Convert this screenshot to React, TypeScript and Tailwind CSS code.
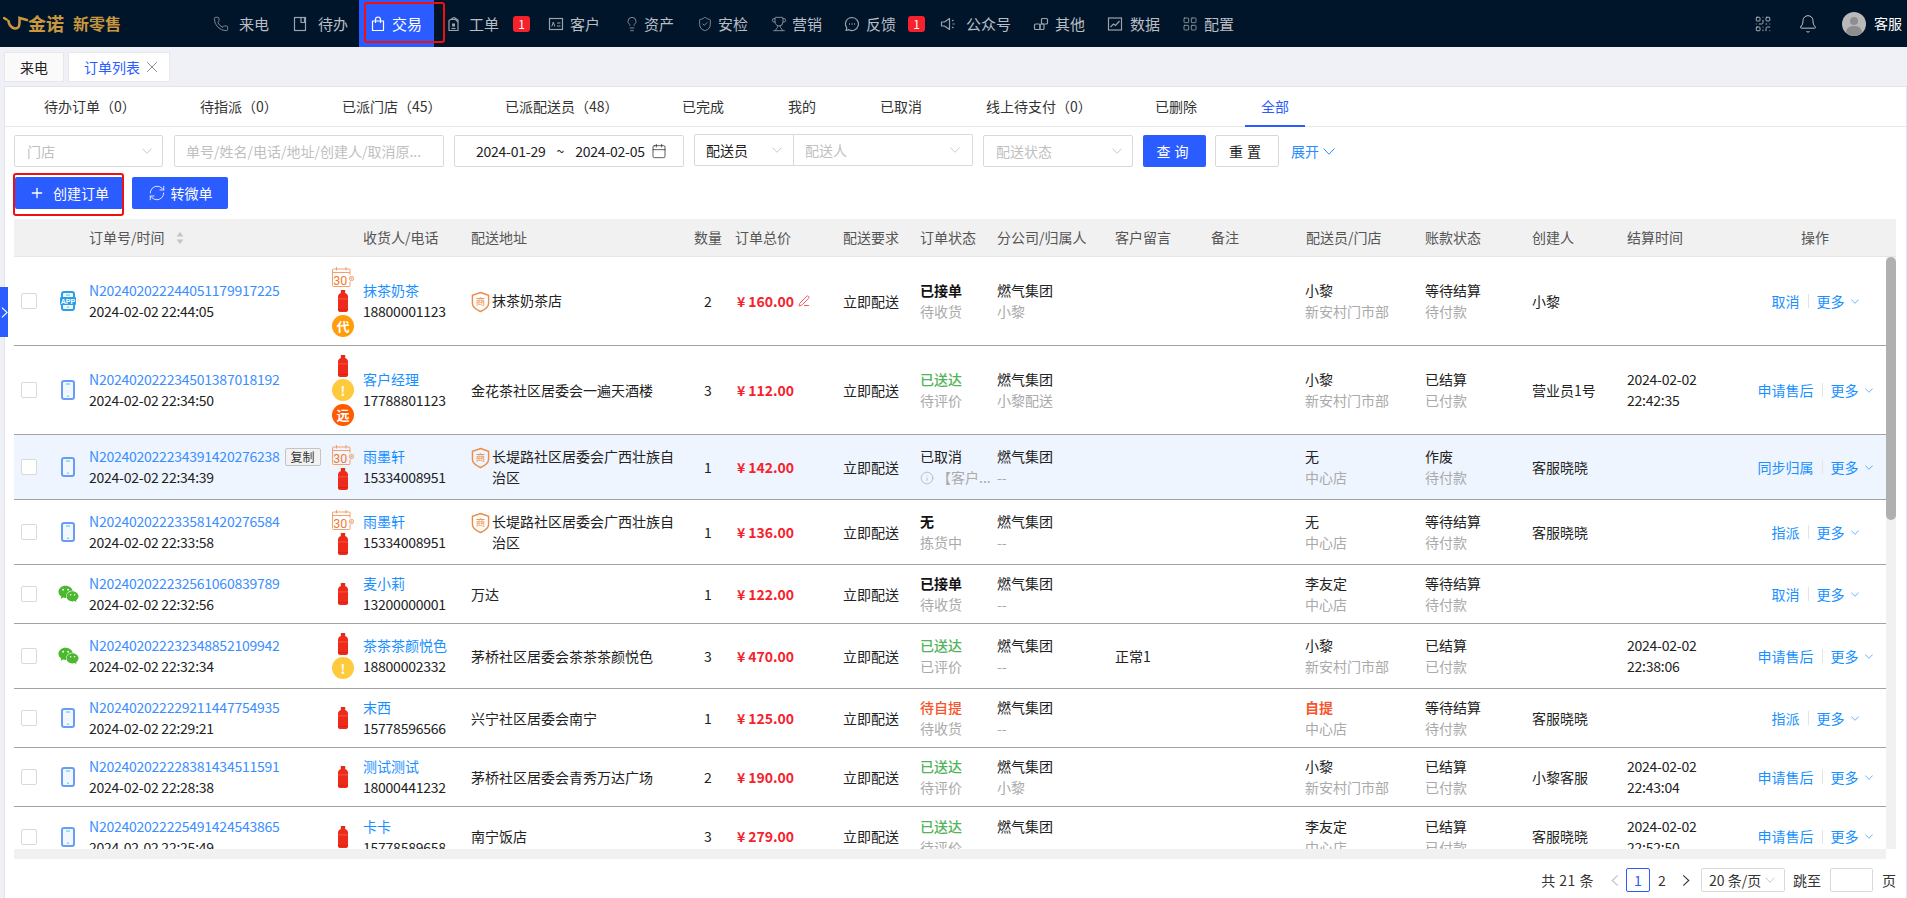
import type React from "react"
import { Bell, Calendar, Info, LayoutGrid, Lightbulb, PenLine, Phone, Plus, QrCode, RefreshCw, ShieldCheck, Trophy, X } from "lucide-react"
import { FaWeixin } from "react-icons/fa"

type IconProps = { className?: string; strokeWidth?: number }

const TodoIcon = ({ className }: IconProps) => (
  <svg viewBox="0 0 16 16" fill="none" stroke="currentColor" strokeWidth="1.2" className={className}>
    <rect x="2.500" y="1.500" width="11" height="13" />
    <path d="M9 1.500v5h3.500v-5" />
  </svg>
)

const BagIcon = ({ className }: IconProps) => (
  <svg viewBox="0 0 16 16" fill="none" stroke="currentColor" strokeWidth="1.2" className={className}>
    <path d="M2.500 5h11v9.500h-11z" strokeLinejoin="round" />
    <path d="M5.500 7V3.500a2.500 2.500 0 0 1 5 0V7" />
  </svg>
)

const TicketIcon = ({ className }: IconProps) => (
  <svg viewBox="0 0 16 16" fill="none" stroke="currentColor" strokeWidth="1.2" className={className}>
    <path d="M4 4.500l5-3 4 2.500v10.500H4z" strokeLinejoin="round" />
    <path d="M5 3.500h5.500L13 6" />
    <rect x="7" y="7.500" width="3" height="3" fill="currentColor" stroke="none" />
    <path d="M6.500 12.500h4" />
  </svg>
)

const CardIcon = ({ className }: IconProps) => (
  <svg viewBox="0 0 16 16" fill="none" stroke="currentColor" strokeWidth="1.2" className={className}>
    <rect x="1.500" y="2.500" width="13" height="11" />
    <path d="M3.800 10.500l1.500-4.500 1.500 4.500M9 7h3.500M9 10h3.500" strokeWidth="1" />
  </svg>
)

const BubbleIcon = ({ className }: IconProps) => (
  <svg viewBox="0 0 16 16" fill="none" stroke="currentColor" strokeWidth="1.2" className={className}>
    <path d="M8 1.500a6.500 6.500 0 1 1-3.200 12.200l-2.800.8.800-2.600A6.500 6.500 0 0 1 8 1.500z" strokeLinejoin="round" />
    <path d="M5 8h.9M7.600 8h.9M10.200 8h.9" strokeWidth="1.300" />
  </svg>
)

const SpeakerIcon = ({ className }: IconProps) => (
  <svg viewBox="0 0 16 16" fill="none" stroke="currentColor" strokeWidth="1.2" className={className}>
    <path d="M1.500 6h3l5-3.500v11l-5-3.500h-3z" strokeLinejoin="round" />
    <path d="M12 5l1.500-1M12.500 8h2M12 11l1.500 1" />
  </svg>
)

const BlocksIcon = ({ className }: IconProps) => (
  <svg viewBox="0 0 16 16" fill="none" stroke="currentColor" strokeWidth="1.2" className={className}>
    <rect x="1.500" y="8" width="5.500" height="5.500" rx="1" />
    <rect x="7" y="8" width="4" height="5.500" rx="1" />
    <rect x="8.500" y="2.500" width="6" height="5.500" rx="1" />
  </svg>
)

const ChartIcon = ({ className }: IconProps) => (
  <svg viewBox="0 0 16 16" fill="none" stroke="currentColor" strokeWidth="1.2" className={className}>
    <rect x="1.500" y="2" width="13" height="12" />
    <path d="M3.500 11l3-3 2 1.500 4-4.500" />
  </svg>
)

// the reference's arrows fill the whole box, lucide's only half of it
const Chev = ({ className }: { className?: string }) => (
  <svg viewBox="0 0 12 7" fill="none" stroke="currentColor" strokeWidth="1" className={className}>
    <path d="M.5.500L6 6.200 11.500.500" />
  </svg>
)

const ChevSide = ({ className, left }: { className?: string; left?: boolean }) => (
  <svg viewBox="0 0 8 12" fill="none" stroke="currentColor" strokeWidth="1.200" className={className}>
    <path d={left ? "M7 .5L1 6l6 5.500" : "M1 .5L7 6l-6 5.500"} />
  </svg>
)

const navItems = [
  { label: "来电", Icon: Phone, box: "w-[79px] gap-[10px]" },
  { label: "待办", Icon: TodoIcon, box: "w-[78px] gap-[10px]" },
  { label: "交易", Icon: BagIcon, box: "w-[75px] gap-[6px]", active: true },
  { label: "工单", Icon: TicketIcon, box: "w-[103px] gap-[8px]", badge: 1 },
  { label: "客户", Icon: CardIcon, box: "w-[76px] gap-[6px]" },
  { label: "资产", Icon: Lightbulb, box: "w-[73px] gap-[4px]" },
  { label: "安检", Icon: ShieldCheck, box: "w-[74px] gap-[5px]" },
  { label: "营销", Icon: Trophy, box: "w-[73px] gap-[5px]" },
  { label: "反馈", Icon: BubbleIcon, box: "w-[96px] gap-[6px]", badge: 1 },
  { label: "公众号", Icon: SpeakerIcon, box: "w-[93px] gap-[10px]" },
  { label: "其他", Icon: BlocksIcon, box: "w-[74px] gap-[6px]" },
  { label: "数据", Icon: ChartIcon, box: "w-[75px] gap-[7px]" },
  { label: "配置", Icon: LayoutGrid, box: "w-[74px] gap-[6px]" },
]

const subTabs = [
  { label: "待办订单（0）", box: "w-[156px]" },
  { label: "待指派（0）", box: "w-[142px]" },
  { label: "已派门店（45）", box: "w-[163px]" },
  { label: "已派配送员（48）", box: "w-[177px]" },
  { label: "已完成", box: "w-[106px]" },
  { label: "我的", box: "w-[92px]" },
  { label: "已取消", box: "w-[106px]" },
  { label: "线上待支付（0）", box: "w-[169px]" },
  { label: "已删除", box: "w-[90px]" },
]

type Row = {
  h: string
  bg?: string
  no: string
  time: string
  source: "app" | "phone" | "wechat"
  marks: string[]
  name: string
  phone: string
  address: string
  shop?: boolean
  qty: number
  price: string
  edit?: boolean
  status: string
  statusCls: string
  sub: string
  company: string
  owner: string
  remark?: string
  person: string
  personCls?: string
  store: string
  account: string
  paid: string
  creator?: string
  settle?: string[]
  action: string
  copy?: boolean
}

const bold = "font-bold text-[#111]"
const green = "text-[#52b35a] font-medium"
// digits in the reference run a little narrower than any installed font
const digits = "tracking-[-0.24px]"

const rows: Row[] = [
  { h: "h-[89px]", no: "N202402022244051179917225", time: "2024-02-02 22:44:05", source: "app", marks: ["cal", "gas", "dai"], name: "抹茶奶茶", phone: "18800001123", address: "抹茶奶茶店", shop: true, qty: 2, price: "160.00", edit: true, status: "已接单", statusCls: bold, sub: "待收货", company: "燃气集团", owner: "小黎", person: "小黎", store: "新安村门市部", account: "等待结算", paid: "待付款", creator: "小黎", action: "取消" },
  { h: "h-[89px]", no: "N202402022234501387018192", time: "2024-02-02 22:34:50", source: "phone", marks: ["gas", "warn", "yuan"], name: "客户经理", phone: "17788801123", address: "金花茶社区居委会一遍天酒楼", qty: 3, price: "112.00", status: "已送达", statusCls: green, sub: "待评价", company: "燃气集团", owner: "小黎配送", person: "小黎", store: "新安村门市部", account: "已结算", paid: "已付款", creator: "营业员1号", settle: ["2024-02-02", "22:42:35"], action: "申请售后" },
  { h: "h-[65px]", bg: "bg-[#eef5fe]", copy: true, no: "N202402022234391420276238", time: "2024-02-02 22:34:39", source: "phone", marks: ["cal", "gas"], name: "雨墨轩", phone: "15334008951", address: "长堤路社区居委会广西壮族自治区", shop: true, qty: 1, price: "142.00", status: "已取消", statusCls: "text-[#222]", sub: "【客户...", company: "燃气集团", owner: "--", person: "无", store: "中心店", account: "作废", paid: "待付款", creator: "客服晓晓", action: "同步归属" },
  { h: "h-[65px]", no: "N202402022233581420276584", time: "2024-02-02 22:33:58", source: "phone", marks: ["cal", "gas"], name: "雨墨轩", phone: "15334008951", address: "长堤路社区居委会广西壮族自治区", shop: true, qty: 1, price: "136.00", status: "无", statusCls: bold, sub: "拣货中", company: "燃气集团", owner: "--", person: "无", store: "中心店", account: "等待结算", paid: "待付款", creator: "客服晓晓", action: "指派" },
  { h: "h-[59px]", no: "N202402022232561060839789", time: "2024-02-02 22:32:56", source: "wechat", marks: ["gas"], name: "麦小莉", phone: "13200000001", address: "万达", qty: 1, price: "122.00", status: "已接单", statusCls: bold, sub: "待收货", company: "燃气集团", owner: "--", person: "李友定", store: "中心店", account: "等待结算", paid: "待付款", action: "取消" },
  { h: "h-[65px]", no: "N202402022232348852109942", time: "2024-02-02 22:32:34", source: "wechat", marks: ["gas", "warn"], name: "茶茶茶颜悦色", phone: "18800002332", address: "茅桥社区居委会茶茶茶颜悦色", qty: 3, price: "470.00", status: "已送达", statusCls: green, sub: "已评价", company: "燃气集团", owner: "--", remark: "正常1", person: "小黎", store: "新安村门市部", account: "已结算", paid: "已付款", settle: ["2024-02-02", "22:38:06"], action: "申请售后" },
  { h: "h-[59px]", no: "N202402022229211447754935", time: "2024-02-02 22:29:21", source: "phone", marks: ["gas"], name: "末西", phone: "15778596566", address: "兴宁社区居委会南宁", qty: 1, price: "125.00", status: "待自提", statusCls: "text-[#f5562d] font-medium", sub: "待收货", company: "燃气集团", owner: "--", person: "自提", personCls: "text-[#f5562d] font-bold", store: "中心店", account: "等待结算", paid: "待付款", creator: "客服晓晓", action: "指派" },
  { h: "h-[59px]", no: "N202402022228381434511591", time: "2024-02-02 22:28:38", source: "phone", marks: ["gas"], name: "测试测试", phone: "18000441232", address: "茅桥社区居委会青秀万达广场", qty: 2, price: "190.00", status: "已送达", statusCls: green, sub: "待评价", company: "燃气集团", owner: "小黎", person: "小黎", store: "新安村门市部", account: "已结算", paid: "已付款", creator: "小黎客服", settle: ["2024-02-02", "22:43:04"], action: "申请售后" },
  { h: "h-[60px]", no: "N202402022225491424543865", time: "2024-02-02 22:25:49", source: "phone", marks: ["gas"], name: "卡卡", phone: "15778589658", address: "南宁饭店", qty: 3, price: "279.00", status: "已送达", statusCls: green, sub: "待评价", company: "燃气集团", owner: "--", person: "李友定", store: "中心店", account: "已结算", paid: "已付款", creator: "客服晓晓", settle: ["2024-02-02", "22:52:50"], action: "申请售后" },
]

const headCols = "grid grid-cols-[40px_28px_245px_32px_108px_223px_36px_112px_77px_77px_118px_96px_94px_120px_107px_95px_112px_162px]"
const rowCols = "grid grid-cols-[40px_28px_245px_32px_108px_223px_36px_112px_77px_77px_118px_96px_94px_120px_107px_95px_112px_152px]"

const Gas = () => (
  <svg viewBox="0 0 10 22" className="h-[22px] w-[10px]">
    <rect x="2.800" y="0" width="4.400" height="3" rx="0.600" fill="#d9301c" />
    <path d="M0 6.500C0 4.200 2 2.800 5 2.800s5 1.400 5 3.700V20c0 1.200-.8 2-2 2H2c-1.200 0-2-.8-2-2z" fill="#ee2a1b" />
    <rect x="0" y="8.500" width="10" height="0.800" fill="#ff8a6a" opacity="0.6" />
    <rect x="0" y="19" width="10" height="0.700" fill="#b81d10" opacity="0.6" />
  </svg>
)

const Cal30 = () => (
  <svg viewBox="0 0 22 22" className="h-[22px] w-[22px]" fill="none" stroke="#f0965e" strokeWidth="0.900">
    <path d="M18 15.500v4a1 1 0 0 1-1 1H1.500a1 1 0 0 1-1-1V4a1 1 0 0 1 1-1H17a1 1 0 0 1 1 1v5" />
    <path d="M.5 6.500H18M4.500 1v3.500M14 1v3.500" />
    <circle cx="19.500" cy="12.500" r="2.200" />
    <circle cx="19.500" cy="12.500" r="0.700" />
    <text x="1.300" y="18.500" fontSize="12.500" fill="#ee7a36" stroke="none" fontFamily="'Roboto',sans-serif">30</text>
  </svg>
)

const Dot = ({ cls, children }: { cls: string; children: React.ReactNode }) => (
  <span className={`flex h-[22px] w-[22px] items-center justify-center rounded-full text-[13px] leading-none font-bold text-white ${cls}`}>{children}</span>
)

const Mark = ({ kind }: { kind: string }) => {
  if (kind === "cal") return <Cal30 />
  if (kind === "gas") return <Gas />
  if (kind === "warn") return <Dot cls="bg-[#ffc93c]">!</Dot>
  if (kind === "dai") return <Dot cls="bg-[#ff9d0a]">代</Dot>
  return <Dot cls="bg-[#ff5a00]">远</Dot>
}

const Source = ({ kind }: { kind: Row["source"] }) => {
  if (kind === "wechat") return <FaWeixin className="h-[20px] w-[21px] text-[#4cb82f]" />
  const line = kind === "app" ? "#2a9fe6" : "#6a9cf5"
  return (
    <svg viewBox="0 0 16 20" className="h-[20px] w-[16px]">
      <rect x="2" y="1" width="12" height="18" rx="2" fill="#f2f7ff" stroke={line} strokeWidth="2" />
      <rect x="6" y="3.500" width="4" height="1" fill="#3ccfc4" />
      <rect x="7.300" y="15.500" width="1.400" height="1.400" fill="#3ccfc4" />
      {kind === "app" && (
        <>
          <rect x="0" y="6" width="16" height="8" rx="1" fill="#2a9fe6" />
          <text x="8" y="12.600" textAnchor="middle" fontSize="7" fontWeight="700" fill="#fff" fontFamily="'Liberation Sans',sans-serif">APP</text>
        </>
      )}
    </svg>
  )
}

const Shop = () => (
  <svg viewBox="0 0 20 22" className="mt-[1px] h-[22px] w-[19px] shrink-0" fill="none">
    <path d="M10 1l8.500 3v8.500c0 3.500-4 6.500-8.500 8.500-4.500-2-8.500-5-8.500-8.500V4z" stroke="#ee8b45" strokeWidth="1.500" />
    <text x="10" y="14.500" textAnchor="middle" fontSize="10" fill="#ee8b45" fontFamily="'Noto Sans CJK SC',sans-serif">商</text>
  </svg>
)

const Select = ({ text, box }: { text: string; box: string }) => (
  <div className={`flex h-[32px] items-center justify-between rounded-[2px] border border-[#d9d9d9] pr-[10px] pl-[12px] text-[#bfbfbf] ${box}`}>
    <span>{text}</span>
    <Chev className="h-[6px] w-[10px] text-[#bfbfbf]" />
  </div>
)

const TwoLines = ({ top, bottom, topCls = "text-[#222]" }: { top: string; bottom: string; topCls?: string }) => (
  <div className="flex flex-col justify-center pl-[5px]">
    <div className={topCls}>{top}</div>
    <div className="whitespace-nowrap text-[#aaaaaa]">{bottom}</div>
  </div>
)

const Cell = ({ children }: { children?: React.ReactNode }) => <div className="flex items-center pl-[5px] text-[#222]">{children}</div>

const OrderRow = ({ row }: { row: Row }) => (
  <div className={`${rowCols} border-b border-[#a3a3a3] ${row.h} ${row.bg ?? "bg-white"}`}>
    <div className="flex items-center pl-[7px]">
      <span className="h-[16px] w-[16px] rounded-[2px] border border-[#d9d9d9] bg-white" />
    </div>
    <div className="flex items-center justify-center">
      <Source kind={row.source} />
    </div>
    <div className="flex flex-col justify-center pl-[7px]">
      <div className="flex items-center">
        <span className={`text-[#3a8eff] ${digits}`}>{row.no}</span>
        {row.copy && <span className="ml-[5px] flex h-[18px] w-[36px] items-center justify-center rounded-[2px] border border-[#c4c4c4] bg-[#f2f2f2] text-[12px] text-[#333]">复制</span>}
      </div>
      <div className={`text-[#222] ${digits}`}>{row.time}</div>
    </div>
    <div className="flex flex-col items-center justify-center gap-[2.5px]">
      {row.marks.map((m, i) => (
        <Mark key={i} kind={m} />
      ))}
    </div>
    <div className="flex flex-col justify-center pl-[4px]">
      <div className="text-[#1890ff]">{row.name}</div>
      <div className={`text-[#222] ${digits}`}>{row.phone}</div>
    </div>
    <div className="flex items-center pl-[4px] text-[#222]">
      <div className="flex items-start">
        {row.shop && <Shop />}
        <div className={row.shop ? "ml-[2px] w-[184px]" : ""}>{row.address}</div>
      </div>
    </div>
    <div className="flex items-center justify-center text-[#222]">{row.qty}</div>
    <div className="flex items-center pl-[11px] font-bold text-[#f5222d]">
      <span className="mr-[3px]">¥</span>
      {row.price}
      {row.edit && <PenLine className="ml-[4px] h-[12px] w-[12px]" strokeWidth={1.500} />}
    </div>
    <Cell>立即配送</Cell>
    <div className="flex flex-col justify-center pl-[5px]">
      <div className={row.statusCls}>{row.status}</div>
      <div className="flex items-center text-[#aaaaaa]">
        {row.sub.startsWith("【") && <Info className="mr-[3px] h-[14px] w-[14px]" strokeWidth={1.200} />}
        {row.sub}
      </div>
    </div>
    <TwoLines top={row.company} bottom={row.owner} />
    <Cell>{row.remark}</Cell>
    <Cell />
    <TwoLines top={row.person} bottom={row.store} topCls={row.personCls ?? "text-[#222]"} />
    <TwoLines top={row.account} bottom={row.paid} />
    <Cell>{row.creator}</Cell>
    <div className={`flex flex-col justify-center pl-[5px] text-[#222] ${digits}`}>
      {row.settle?.map((s) => (
        <div key={s}>{s}</div>
      ))}
    </div>
    <div className="flex items-center justify-center pl-[10px] text-[#1890ff]">
      <span>{row.action}</span>
      <span className="mx-[8px] h-[14px] w-px bg-[#e4e4e4]" />
      <span>更多</span>
      <Chev className="ml-[6px] h-[5px] w-[8px]" />
    </div>
  </div>
)

const headers = [
  { t: "", cls: "" },
  { t: "", cls: "" },
  { t: "订单号/时间", cls: "pl-[7px]", sort: true },
  { t: "", cls: "" },
  { t: "收货人/电话", cls: "pl-[4px]" },
  { t: "配送地址", cls: "pl-[4px]" },
  { t: "数量", cls: "justify-center" },
  { t: "订单总价", cls: "pl-[9px]" },
  { t: "配送要求", cls: "pl-[5px]" },
  { t: "订单状态", cls: "pl-[5px]" },
  { t: "分公司/归属人", cls: "pl-[5px]" },
  { t: "客户留言", cls: "pl-[5px]" },
  { t: "备注", cls: "pl-[5px]" },
  { t: "配送员/门店", cls: "pl-[6px]" },
  { t: "账款状态", cls: "pl-[5px]" },
  { t: "创建人", cls: "pl-[5px]" },
  { t: "结算时间", cls: "pl-[5px]" },
  { t: "操作", cls: "justify-center" },
]

export default function App() {
  return (
    <div className="relative flex h-screen w-full flex-col overflow-hidden bg-[#eff1f6] font-['Noto_Sans_CJK_SC','Microsoft_YaHei',sans-serif] text-[14px] leading-[21px]">
      {/* top nav */}
      <header className="flex h-[47px] shrink-0 items-center bg-[#001529]">
        <div className="flex w-[202px] items-center pl-[3px] text-[#c9983e]">
          <svg viewBox="0 0 26 17" className="h-[17px] w-[26px]" fill="none" stroke="#c9983e" strokeWidth="2.600" strokeLinecap="round">
            <path d="M1 3l2.500 1.500M5.500 6c.5 6 6 9 9.500 6.500 2-1.500 1.500-6 1.500-9.500L24 5" />
          </svg>
          <span className="-ml-px text-[18px] font-bold">金诺</span>
          <span className="ml-[9px] text-[16px] font-bold">新零售</span>
        </div>
        {navItems.map(({ label, Icon, box, active, badge }) => (
          <div key={label} className={`relative flex h-full items-center pl-[11px] text-[15px] ${box} ${active ? "bg-[#2b5cff] text-white" : "text-[#b9bec5]"}`}>
            <Icon className={active ? "h-[16px] w-[16px] text-white" : "h-[16px] w-[16px] text-[#9aa3ad]"} strokeWidth={1.200} />
            <span className="whitespace-nowrap">{label}</span>
            {badge && <span className="ml-[6px] flex h-[16px] w-[17px] items-center justify-center rounded-[3px] bg-[#f5222d] text-[12px] text-white">{badge}</span>}
            {active && <span className="absolute top-[2px] left-[5px] h-[41px] w-[81px] rounded-[3px] border-2 border-[#f01010]" />}
          </div>
        ))}
        <div className="ml-auto flex items-center">
          <QrCode className="h-[18px] w-[18px] text-[#b9bec5]" strokeWidth={1.200} />
          <Bell className="ml-[26px] h-[20px] w-[20px] text-[#d0d4d9]" strokeWidth={1.100} />
          <svg viewBox="0 0 24 24" className="ml-[24px] h-[24px] w-[24px]">
            <circle cx="12" cy="12" r="12" fill="#b9b9b9" />
            <circle cx="12" cy="9" r="4" fill="#8e8e8e" />
            <path d="M4 20c1-5 4-6 8-6s7 1 8 6c-2 2.500-5 4-8 4s-6-1.500-8-4z" fill="#8e8e8e" />
          </svg>
          <span className="mr-[5px] ml-[8px] text-white">客服</span>
        </div>
      </header>

      {/* page tabs */}
      <div className="flex h-[39px] shrink-0 gap-[4px] pt-[5px] pl-[4px]">
        <div className="flex h-[30px] w-[60px] items-center justify-center border border-[#e8e8e8] bg-[#fafafa] text-[#222]">来电</div>
        <div className="flex h-[30px] w-[102px] items-center gap-[6px] border border-[#e8e8e8] bg-white pl-[15px] text-[#2b5cff]">
          订单列表
          <X className="-mx-[3px] h-[18px] w-[18px] text-[#666]" strokeWidth={1} />
        </div>
      </div>

      {/* panel */}
      <main className="ml-[4px] flex min-h-0 flex-1 flex-col border border-b-0 border-[#e4e5ec] bg-white">
        <div className="flex h-[40px] shrink-0 items-stretch border-b border-[#e8e8e8] pl-[39px] text-[#333]">
          {subTabs.map((t) => (
            <div key={t.label} className={`flex items-center whitespace-nowrap ${t.box}`}>
              {t.label}
            </div>
          ))}
          <div className="-mb-px flex w-[60px] items-center justify-center border-b-2 border-[#2b5cff] text-[#2b5cff]">全部</div>
        </div>

        {/* filters */}
        <div className="mt-[8px] flex h-[32px] shrink-0 items-center pl-[9px]">
          <Select text="门店" box="w-[149px]" />
          <div className="ml-[11px] flex h-[32px] w-[270px] items-center rounded-[2px] border border-[#d9d9d9] pl-[11px] text-[#bfbfbf]">单号/姓名/电话/地址/创建人/取消原...</div>
          <div className="ml-[10px] flex h-[32px] w-[230px] items-center rounded-[2px] border border-[#d9d9d9] pl-[21px] text-[#222]">
            <span className={digits}>2024-01-29</span>
            <span className="mx-[11px]">~</span>
            <span className={digits}>2024-02-05</span>
            <Calendar className="ml-[6px] h-[16px] w-[16px]" strokeWidth={1.100} />
          </div>
          <div className="-mt-[2px] ml-[10px] flex h-[32px] w-[279px] rounded-[2px] border border-[#d9d9d9]">
            <div className="flex w-[99px] items-center justify-between border-r border-[#d9d9d9] pr-[11px] pl-[11px] text-[#222]">
              配送员
              <Chev className="h-[6px] w-[10px] text-[#bfbfbf]" />
            </div>
            <div className="flex flex-1 items-center justify-between pr-[12px] pl-[11px] text-[#bfbfbf]">
              配送人
              <Chev className="h-[6px] w-[10px]" />
            </div>
          </div>
          <Select text="配送状态" box="ml-[10px] w-[150px]" />
          <div className="ml-[10px] flex h-[32px] w-[63px] items-center justify-center rounded-[2px] bg-[#2b5cff] tracking-[4px] text-white">查询</div>
          <div className="ml-[9px] flex h-[32px] w-[64px] items-center justify-center rounded-[2px] border border-[#d9d9d9] tracking-[4px] text-[#222]">重置</div>
          <div className="ml-[12px] flex items-center text-[#2b8cff]">
            展开
            <Chev className="ml-[4px] h-[7px] w-[12px]" />
          </div>
        </div>

        {/* actions */}
        <div className="mt-[10px] flex h-[32px] shrink-0 gap-[9px] pl-[10px]">
          <div className="relative flex w-[108px] items-center justify-center gap-[8px] rounded-[2px] bg-[#2b5cff] text-white">
            <Plus className="h-[16px] w-[16px]" strokeWidth={2} />
            创建订单
            <span className="absolute -top-[4px] -left-[2px] h-[43px] w-[111px] rounded-[3px] border-2 border-[#f01010]" />
          </div>
          <div className="flex w-[96px] items-center justify-center gap-[5px] rounded-[2px] bg-[#2b5cff] text-white">
            <RefreshCw className="h-[18px] w-[18px]" strokeWidth={1.100} />
            转微单
          </div>
        </div>

        {/* table */}
        <div className="relative mt-[10px] ml-[9px] w-[1882px] shrink-0">
          <div className={`${headCols} h-[38px] border-b border-[#e6e6e6] bg-[#f1f1f1] text-[#555]`}>
            {headers.map((h, i) => (
              <div key={i} className={`flex items-center whitespace-nowrap ${h.cls}`}>
                {h.t}
                {h.sort && (
                  <svg viewBox="0 0 8 14" className="ml-[11px] h-[14px] w-[8px]" fill="#c4c4c4">
                    <path d="M4 1l3.500 4.500h-7zM4 13L.5 8.500h7z" />
                  </svg>
                )}
              </div>
            ))}
          </div>
          <div className="h-[592px] w-[1872px] overflow-hidden">
            {rows.map((row) => (
              <OrderRow key={row.no} row={row} />
            ))}
          </div>
          <div className="h-[10px] w-[1872px] bg-[#f1f1f1]" />
          {/* vertical scrollbar over the body */}
          <div className="absolute top-[38px] right-0 h-[592px] w-[10px] bg-[#f1f1f1]">
            <div className="h-[263px] w-full rounded-[5px] bg-[#b0b0b0]" />
          </div>
        </div>

        {/* pagination */}
        <div className="mt-[9px] flex h-[24px] shrink-0 items-center justify-end pr-[10px] text-[#333]">
          <span className="tracking-[0.5px]">共 21 条</span>
          <ChevSide left className="ml-[17px] h-[11px] w-[8px] text-[#bfbfbf]" />
          <span className="ml-[7px] flex h-[24px] w-[24px] items-center justify-center rounded-[2px] border border-[#2b5cff] text-[#2b5cff]">1</span>
          <span className="ml-[8px] w-[8px]">2</span>
          <ChevSide className="ml-[16px] h-[11px] w-[8px]" />
          <div className="ml-[11px] flex h-[24px] w-[84px] items-center justify-between rounded-[2px] border border-[#d9d9d9] pr-[9px] pl-[7px]">
            20 条/页
            <Chev className="h-[6px] w-[10px] text-[#bfbfbf]" />
          </div>
          <span className="ml-[8px]">跳至</span>
          <span className="ml-[9px] h-[24px] w-[43px] rounded-[2px] border border-[#d9d9d9]" />
          <span className="ml-[9px]">页</span>
        </div>
      </main>

      {/* expand handle */}
      <div className="absolute top-[287px] left-0 flex h-[50px] w-[8px] items-center justify-center bg-[#2b5cff] text-white">
        <ChevSide className="h-[11px] w-[7px] shrink-0" />
      </div>
    </div>
  )
}
